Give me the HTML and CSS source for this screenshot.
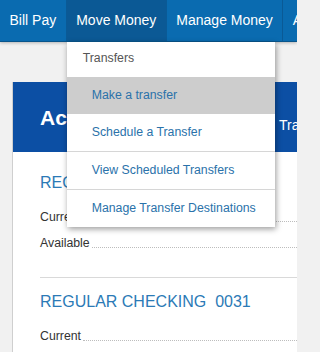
FILE: index.html
```html
<!DOCTYPE html>
<html lang="en">
<head>
<meta charset="utf-8">
<title>Move Money</title>
<link rel="stylesheet" href="styles.css">
</head>
<body>
<div class="frame">
<nav class="topnav">
  <ul class="menu">
    <li class="menu-item">Bill Pay</li>
    <li class="menu-item is-active">Move Money
      <div class="dropdown">
        <div class="dropdown-head">Transfers</div>
        <a class="dropdown-link is-hover">Make a transfer</a>
        <a class="dropdown-link">Schedule a Transfer</a>
        <a class="dropdown-link has-rule">View Scheduled Transfers</a>
        <a class="dropdown-link has-rule">Manage Transfer Destinations</a>
      </div>
    </li>
    <li class="menu-item">Manage Money</li>
    <li class="menu-item">Account Services</li>
  </ul>
</nav>
<main class="page">
  <section class="card">
    <header class="card-head">
      <h1 class="card-title">Accounts</h1>
      <span class="card-tab">Transactions</span>
    </header>
    <div class="card-body">
      <h2 class="acct-title">REGULAR SAVINGS&nbsp;&nbsp;0024</h2>
      <div class="acct-row"><span class="acct-label">Current</span><span class="leader"></span></div>
      <div class="acct-row"><span class="acct-label">Available</span><span class="leader"></span></div>
      <hr class="acct-rule">
      <h2 class="acct-title">REGULAR CHECKING&nbsp;&nbsp;0031</h2>
      <div class="acct-row"><span class="acct-label">Current</span><span class="leader"></span></div>
    </div>
  </section>
</main>
</div>
</body>
</html>
```

FILE: styles.css
```css
html, body {
  margin: 0;
  padding: 0;
  overflow: hidden;
}
body {
  background: #f1f1f1;
  font-family: "Liberation Sans", Arial, sans-serif;
  color: #333;
}
.frame {
  position: relative;
  width: 297px;
  height: 352px;
  overflow: hidden;
}
.topnav {
  position: relative;
  z-index: 5;
  background: #0a6bb0;
  border-bottom: 1px solid #08558c;
  box-shadow: 0 1px 3px rgba(0, 0, 0, 0.25);
}
.menu {
  display: flex;
  margin: 0;
  padding: 0;
  list-style: none;
  white-space: nowrap;
}
.menu-item {
  position: relative;
  flex: none;
  height: 41px;
  line-height: 41px;
  padding: 0 9.5px;
  font-size: 14px;
  color: #fff;
  border-right: 1px solid #0a5a96;
}
.menu-item.is-active {
  background: #0b5995;
}
.dropdown {
  position: absolute;
  top: 42px;
  left: 0;
  width: 208px;
  background: #fff;
  box-shadow: 1px 2px 6px rgba(0, 0, 0, 0.4);
  line-height: normal;
  white-space: nowrap;
}
.dropdown-head {
  height: 35px;
  line-height: 33px;
  padding-left: 16px;
  font-size: 12.3px;
  color: #555;
}
.dropdown-link {
  display: block;
  height: 37px;
  line-height: 37px;
  padding-left: 25px;
  font-size: 12.3px;
  color: #2a72aa;
  text-decoration: none;
}
.dropdown-link.is-hover {
  background: #cdcdcd;
}
.dropdown-link.has-rule {
  border-top: 1px solid #d6d6d6;
}
.page {
  padding: 40px 0 0 12px;
}
.card {
  width: 420px;
  background: #fff;
  border-left: 1px solid #cfcfcf;
}
.card-head {
  display: flex;
  height: 70px;
  background: #0c4fa4;
  color: #fff;
  padding-left: 27px;
}
.card-title {
  flex: none;
  width: 239px;
  margin: 0;
  align-self: center;
  font-size: 21px;
  font-weight: bold;
  line-height: 26px;
  padding-top: 2px;
}
.card-tab {
  align-self: flex-end;
  padding-bottom: 19px;
  font-size: 14px;
  line-height: 16px;
}
.card-body {
  padding: 21px 0 40px 27px;
}
.acct-title {
  margin: 0 0 11px;
  font-size: 16px;
  font-weight: normal;
  line-height: 20px;
  color: #2b7ab6;
  white-space: nowrap;
}
.acct-row {
  display: flex;
  align-items: flex-end;
  height: 26px;
  line-height: 26px;
  font-size: 12.3px;
  color: #333;
}
.acct-label {
  flex: none;
}
.leader {
  flex: 1;
  margin: 0 0 8px 2px;
  border-bottom: 1px dotted #bdbdbd;
}
.acct-rule {
  margin: 21px 0 14px;
  border: 0;
  border-top: 1px solid #d9d9d9;
}
```
